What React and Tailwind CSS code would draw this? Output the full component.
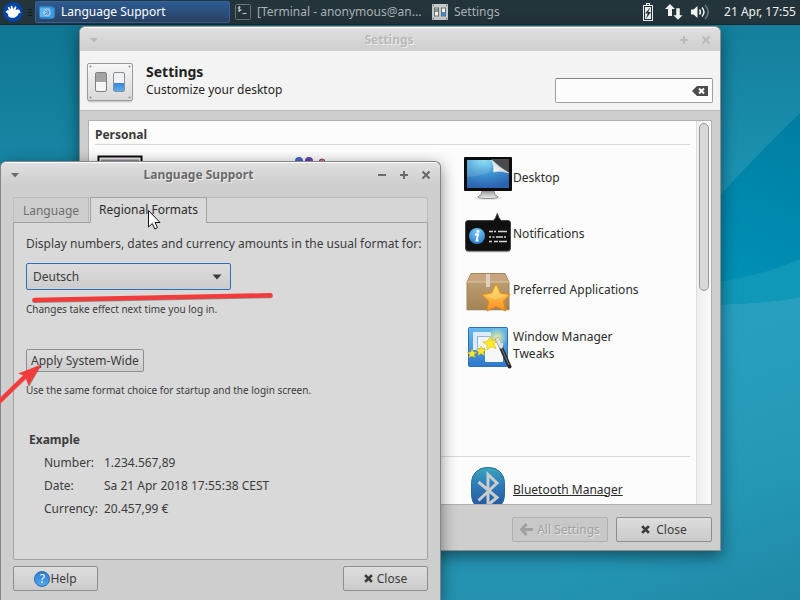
import { useState } from 'react';

// Desktop background with the soft curves on the right
function Wallpaper() {
  return (
    <svg className="absolute inset-0 w-full h-full" viewBox="0 0 800 600" preserveAspectRatio="none" aria-hidden="true">
      <defs>
        <linearGradient id="sky" gradientUnits="userSpaceOnUse" x1="0" y1="0" x2="0" y2="600">
          <stop offset="0" stopColor="#0e728f" />
          <stop offset="0.3" stopColor="#1889a7" />
          <stop offset="0.6" stopColor="#279ebf" />
          <stop offset="1" stopColor="#2492b0" />
        </linearGradient>
        <linearGradient id="sky-top" gradientUnits="userSpaceOnUse" x1="0" y1="25" x2="0" y2="200">
          <stop offset="0" stopColor="#147f9c" />
          <stop offset="1" stopColor="#1c95b5" />
        </linearGradient>
        <linearGradient id="sky-low" gradientUnits="userSpaceOnUse" x1="700" y1="340" x2="800" y2="620">
          <stop offset="0" stopColor="#289fbf" />
          <stop offset="0.5" stopColor="#2498b7" />
          <stop offset="1" stopColor="#1f86a4" />
        </linearGradient>
        <linearGradient id="wave" gradientUnits="userSpaceOnUse" x1="800" y1="113" x2="720" y2="290">
          <stop offset="0" stopColor="#007da1" />
          <stop offset="1" stopColor="#0092b8" />
        </linearGradient>
      </defs>
      <rect width="800" height="600" fill="url(#sky)" />
      <path d="M560 0H800V300H560Z" fill="url(#sky-top)" />
      <path d="M560 290Q700 312 800 297V600H560Z" fill="url(#sky-low)" />
      <path d="M640 290Q710 200 800 113V297Q760 306 640 305Z" fill="url(#wave)" />
      <path d="M640 290Q740 286 800 259V297Q760 306 640 305Z" fill="#1098b9" />
    </svg>
  );
}

function XubuntuLogo() {
  return (
    <svg className="w-5 h-5" viewBox="0 0 20 20" aria-hidden="true">
      <circle cx="10" cy="10" r="10" fill="#0044a6" />
      <path d="M2.500 9.800L4.300 8.300L6 8.600L4.700 5.600L6.200 4.800L8 7.700L7.800 3.900L9.300 3.700L10.200 7.300L12.200 4.300L13.500 5L12.600 8.200L14.700 7.200L16.500 8L17.500 10.500L15.700 11.500L14.500 13.800L11.500 15.700L7.500 15.800L5 14L5.300 12.300Z" fill="#fff" />
    </svg>
  );
}

function FlagIcon() {
  return (
    <svg className="w-4 h-4" viewBox="0 0 16 16" aria-hidden="true">
      <path d="M0 3L2 2H13L16 4V13L13 15H2L0 13Z" fill="#2f80c6" />
      <path d="M1 3.500H11.500V13H1Z" fill="#5bb3ea" />
      <path d="M11.500 4.500H15V14H11.500Z" fill="#3e98dc" />
      <circle cx="8" cy="8.500" r="3.800" fill="#9ccdf0" />
      <path d="M6 6.500L8 8.500L6 11M8.500 6Q11 8.500 8.500 11" stroke="#2f79b5" fill="none" />
    </svg>
  );
}

function TerminalIcon() {
  return (
    <svg className="w-4 h-4" viewBox="0 0 16 16" aria-hidden="true">
      <rect x="0.5" y="0.5" width="15" height="15" rx="1" fill="#26343a" stroke="#6b7474" />
      <path d="M5.500 3.300Q3 2.500 3 3.800T5.500 5.600T3 6.900M4.300 2V8" stroke="#c3c8c8" fill="none" />
      <path d="M7.500 9.500H11.500" stroke="#c3c8c8" />
    </svg>
  );
}

function SwitchesIcon({ className }) {
  return (
    <svg className={className} viewBox="0 0 46 40" preserveAspectRatio="none" aria-hidden="true">
      <defs>
        <linearGradient id="plate" x1="0" y1="0" x2="0" y2="1">
          <stop offset="0" stopColor="#f7f7f7" />
          <stop offset="1" stopColor="#d8d8d8" />
        </linearGradient>
        <linearGradient id="knob-blue" x1="0" y1="0" x2="0" y2="1">
          <stop offset="0" stopColor="#3584d4" />
          <stop offset="1" stopColor="#5aacf0" />
        </linearGradient>
      </defs>
      <rect x="1" y="37" width="44" height="2.500" rx="1" fill="#00000025" />
      <rect x="0.5" y="0.5" width="45" height="37" rx="1.500" fill="url(#plate)" stroke="#9a9a9a" />
      <g fill="#8c8c8c">
        <circle cx="3.500" cy="3.500" r="1" />
        <circle cx="42.500" cy="3.500" r="1" />
        <circle cx="3.500" cy="34.500" r="1" />
        <circle cx="42.500" cy="34.500" r="1" />
      </g>
      <rect x="8.500" y="9.500" width="11" height="19" rx="1.500" fill="#f5f5f5" stroke="#808080" />
      <rect x="9" y="10" width="10" height="9" fill="#a3a3a3" />
      <rect x="26.500" y="9.500" width="11" height="19" rx="1.500" fill="#f2f2f2" stroke="#868e96" />
      <path d="M27 20H37V28H27Z" fill="url(#knob-blue)" />
    </svg>
  );
}

function SmallSwitchesIcon() {
  return (
    <svg className="w-4 h-4" viewBox="0 0 16 16" aria-hidden="true">
      <rect width="16" height="16" rx="1" fill="#c5c8c8" />
      <rect x="2.500" y="4" width="4" height="8" fill="#f3f3f3" stroke="#6d7070" />
      <rect x="3" y="4.500" width="3" height="3.500" fill="#8f9393" />
      <rect x="9.500" y="4" width="4" height="8" fill="#f3f3f3" stroke="#6d7070" />
      <rect x="10" y="8" width="3" height="4" fill="#348ce0" />
      <path d="M1 1h1v1H1zM14 1h1v1h-1zM1 14h1v1H1zM14 14h1v1h-1z" fill="#666" />
    </svg>
  );
}

function BatteryIcon() {
  return (
    <svg className="w-[10px] h-[18px]" viewBox="0 0 10 18" aria-hidden="true">
      <path d="M3 0H7V2H10V18H0V2H3Z" fill="#f2f2f2" />
      <path d="M4 1H6V2H4ZM1 3H9V17H1Z" fill="#22343a" />
      <path d="M2 4H8V16H2Z" fill="#e9ecec" />
      <path d="M7.500 4L2 10.500H4.800L2.800 16L8 9H5.200Z" fill="#22343a" />
    </svg>
  );
}

function NetworkIcon() {
  return (
    <svg className="w-[18px] h-4" viewBox="0 0 18 16" fill="#f2f2f2" aria-hidden="true">
      <path d="M5 0L10 5H7V12H3V5H0Z" />
      <path d="M13 16L8 11H11V4H15V11H18Z" stroke="#22343a" strokeWidth="0.5" />
    </svg>
  );
}

function VolumeIcon() {
  return (
    <svg className="w-[19px] h-4" viewBox="0 0 19 16" fill="none" aria-hidden="true">
      <path d="M0 5.500H2.500L6.500 2V14L2.500 10.500H0Z" fill="#f2f2f2" />
      <path d="M8.500 5.500Q10.500 8 8.500 10.500" stroke="#f2f2f2" strokeWidth="1.500" />
      <path d="M11 3.500Q15 8 11 12.500" stroke="#f2f2f2" strokeWidth="1.500" />
      <path d="M14 1Q20.500 8 14 15" stroke="#70797c" strokeWidth="1.500" />
    </svg>
  );
}

function AppearanceIcon() {
  return (
    <svg className="w-12 h-12" viewBox="0 0 48 48" aria-hidden="true">
      <rect x="2.500" y="3.500" width="43" height="34" fill="#eeeaf0" stroke="#0c0c0c" strokeWidth="2" />
      <path d="M5 6.500H43V34H5Z" fill="#8d8892" />
    </svg>
  );
}

function PeopleIcon() {
  return (
    <svg className="w-12 h-12" viewBox="0 0 48 48" aria-hidden="true">
      <circle cx="19" cy="8" r="4" fill="#4463cf" />
      <circle cx="29" cy="8" r="4" fill="#6843b3" />
      <circle cx="42" cy="9" r="3" fill="#c86aa5" stroke="#8d3f73" />
      <path d="M10 40Q10 14 19 13T24 18Q29 10 38 40Z" fill="#4463cf" />
    </svg>
  );
}

function DesktopIcon() {
  return (
    <svg className="w-12 h-12" viewBox="0 0 48 48" aria-hidden="true">
      <defs>
        <radialGradient id="screen" cx="0.4" cy="0" r="1">
          <stop offset="0" stopColor="#7cdcf5" />
          <stop offset="0.5" stopColor="#3e95d2" />
          <stop offset="1" stopColor="#2c62b0" />
        </radialGradient>
        <linearGradient id="stand" x1="0" y1="0" x2="0" y2="1">
          <stop offset="0" stopColor="#9b9b9b" />
          <stop offset="1" stopColor="#f0f0f0" />
        </linearGradient>
        <linearGradient id="curl" x1="1" y1="0" x2="0" y2="1">
          <stop offset="0" stopColor="#b8b8b8" />
          <stop offset="1" stopColor="#ffffff" />
        </linearGradient>
      </defs>
      <ellipse cx="24" cy="45" rx="14" ry="2" fill="#00000018" />
      <path d="M18 38H30L31 42Q34 43 34 44Q33 45.500 24 45.500T14 44Q14 43 17 42Z" fill="url(#stand)" stroke="#8d8d8d" />
      <rect x="0" y="4" width="48" height="34" rx="1" fill="#0c0c0c" />
      <rect x="3" y="7" width="42" height="28" fill="url(#screen)" />
      <path d="M3 7H27Q28 16 24 20Q15 23 3 24Z" fill="#ffffff22" />
      <path d="M27 6H45V21Z" fill="#4a4a4a" />
      <path d="M27.500 7Q30.500 13 29.500 19Q37 17 45 20Q35 14.500 27.500 7Z" fill="url(#curl)" stroke="#e8e8e8" strokeWidth="0.500" />
    </svg>
  );
}

function NotificationsIcon() {
  return (
    <svg className="w-12 h-12" viewBox="0 0 48 48" aria-hidden="true">
      <defs>
        <radialGradient id="info" cx="0.5" cy="0.2" r="0.9">
          <stop offset="0" stopColor="#79cdf5" />
          <stop offset="1" stopColor="#2670c9" />
        </radialGradient>
      </defs>
      <rect x="2" y="40" width="44" height="3.500" rx="1.500" fill="#00000028" />
      <path d="M4 11.500H29.500Q32 9 33.300 4.500Q34.500 9 37 11.500H44Q46.500 11.500 46.500 14V39Q46.500 42 44 42H4Q1.500 42 1.500 39V14Q1.500 11.500 4 11.500Z" fill="#101010" stroke="#444" />
      <circle cx="13" cy="27" r="8" fill="url(#info)" />
      <circle cx="14" cy="22.500" r="1.400" fill="#fff" />
      <path d="M11 25.500H14L12.500 31.500H14.500" stroke="#fff" strokeWidth="1.800" fill="none" />
      <g stroke="#d5d5d5" strokeWidth="1.300">
        <path d="M25 22.500H43" strokeDasharray="4 1 2 2 9 0" />
        <path d="M25 28H43" strokeDasharray="2 1.500 2 1.500 7 1" />
        <path d="M25 32.500H43" strokeDasharray="3 2 4 1 8 0" />
      </g>
    </svg>
  );
}

function PackageIcon() {
  return (
    <svg className="w-12 h-12" viewBox="0 0 48 48" aria-hidden="true">
      <defs>
        <linearGradient id="box" x1="0" y1="0" x2="0" y2="1">
          <stop offset="0" stopColor="#c3a57c" />
          <stop offset="1" stopColor="#a38355" />
        </linearGradient>
        <linearGradient id="star" x1="0" y1="0" x2="0" y2="1">
          <stop offset="0" stopColor="#ffdb5e" />
          <stop offset="1" stopColor="#fb8f25" />
        </linearGradient>
      </defs>
      <rect x="2" y="42" width="44" height="4" rx="2" fill="#00000020" />
      <path d="M7 8.500H41L45 17V44.500H3V17Z" fill="url(#box)" stroke="#a48253" />
      <path d="M7 9H41L44.500 16.500H3.500Z" fill="#c7a581" />
      <path d="M3 17H45" stroke="#e0c8a0" />
      <path d="M22 9H26V22H22Z" fill="#ded0bd" />
      <path d="M32 18.500L36.500 28L46 29.500L39.500 36L41.500 46L32 41.500L23 46L24.500 36L17.500 29.500L27.500 28Z" fill="url(#star)" stroke="#e08a17" strokeLinejoin="round" />
      <path d="M32 21L35.500 29.200L43 30.500L31.500 34.500L20 30.500L28 29.200Z" fill="#fff1a055" />
    </svg>
  );
}

function TweaksIcon() {
  return (
    <svg className="w-12 h-12" viewBox="0 0 48 48" aria-hidden="true">
      <defs>
        <linearGradient id="tile" x1="0" y1="0" x2="0" y2="1">
          <stop offset="0" stopColor="#66bbec" />
          <stop offset="1" stopColor="#2f78ca" />
        </linearGradient>
        <radialGradient id="glow">
          <stop offset="0" stopColor="#f4f59a" />
          <stop offset="1" stopColor="#f4f59a00" />
        </radialGradient>
      </defs>
      <rect x="4.500" y="6.500" width="39" height="39" rx="1" fill="url(#tile)" stroke="#2d70b5" />
      <rect x="9" y="11" width="18" height="18" rx="1" fill="#dcebf7" />
      <rect x="13.500" y="15.500" width="14" height="12" fill="#f1f6fb" stroke="#8cb7dc" />
      <rect x="21" y="22" width="18" height="19" rx="1" fill="#f7f7f7" />
      <circle cx="33" cy="17" r="10" fill="url(#glow)" />
      <g fill="#ffe928" stroke="#d6b52a" strokeWidth="0.600">
        <path d="M26 15L28 19.500L33 19L30 23L32 27.500L27 26L23 29L23 24L18.500 21L24 20Z" />
        <path d="M17 25L18.500 28L22 28.500L19.500 31L20.500 34.500L17 32.500L14 34.500L14.500 31L12 28.500L16 28Z" />
        <path d="M8 28L9.500 31L12.500 31.500L10 33.500L11 36.500L8 35L5 36.500L6 33.500L3.500 31.500L7 31Z" />
      </g>
      <path d="M33.500 18.500L45.500 45.500" stroke="#28292a" strokeWidth="4" strokeLinecap="round" />
      <path d="M33.500 18.500L37 25.500" stroke="#d8d8d8" strokeWidth="4" strokeLinecap="round" />
      <path d="M33.500 18L45 44" stroke="#ffffff66" strokeWidth="1" />
    </svg>
  );
}

function BluetoothIcon() {
  return (
    <svg className="w-12 h-12" viewBox="0 0 48 48" aria-hidden="true">
      <defs>
        <linearGradient id="bt" x1="0" y1="0" x2="0" y2="1">
          <stop offset="0" stopColor="#3aa5bd" />
          <stop offset="0.400" stopColor="#2f7cb8" />
          <stop offset="1" stopColor="#234f9e" />
        </linearGradient>
      </defs>
      <rect x="7.500" y="2.500" width="33" height="43" rx="15" fill="url(#bt)" stroke="#2a6c91" />
      <path d="M14.500 17L33 32.500L24 40V9.500L33 18L14.500 35.500" fill="none" stroke="#c9cccd" strokeWidth="3" />
    </svg>
  );
}

function CrossIcon() {
  return (
    <svg className="w-[9px] h-[9px]" viewBox="0 0 8 8" aria-hidden="true">
      <path d="M1 1L7 7M7 1L1 7" stroke="currentColor" strokeWidth="2.500" />
    </svg>
  );
}

function TitleBar({ title, active, canMinimize }) {
  const tone = active ? 'text-[#6a6a6a]' : 'text-[#b9b9b9]';

  return (
    <div className={`flex items-center h-6 px-[9px] shrink-0 rounded-t-md bg-linear-to-b from-[#dfdfdf] to-[#cecece] border-t border-white ${tone}`}>
      <button type="button" aria-label="Window menu" className="w-[10px]">
        <svg className="w-[10px] h-3" viewBox="0 0 10 12" aria-hidden="true">
          <path d="M1 4H9L5 8.500Z" fill="currentColor" />
        </svg>
      </button>
      <h1 className="flex-1 text-center font-bold [text-shadow:1px_1px_0_#ffffff99]">{title}</h1>
      <div className="flex gap-3">
        {canMinimize && (
          <button type="button" aria-label="Minimize" className="w-[10px]">
            <svg className="w-[10px] h-[10px]" viewBox="0 0 10 10" aria-hidden="true">
              <path d="M1 5H9" stroke="currentColor" strokeWidth="2" />
            </svg>
          </button>
        )}
        <button type="button" aria-label="Maximize" className="w-[10px]">
          <svg className="w-[10px] h-[10px]" viewBox="0 0 10 10" aria-hidden="true">
            <path d="M1 5H9M5 1V9" stroke="currentColor" strokeWidth="2" />
          </svg>
        </button>
        <button type="button" aria-label="Close window" className="w-[10px]">
          <svg className="w-[10px] h-[10px]" viewBox="0 0 10 10" aria-hidden="true">
            <path d="M1.500 1.500L8.500 8.500M8.500 1.500L1.500 8.500" stroke="currentColor" strokeWidth="2" />
          </svg>
        </button>
      </div>
    </div>
  );
}

function Panel() {
  return (
    <header className="relative flex items-center h-[25px] pl-[3px] pr-1 bg-[#23343a] border-b border-[#1a282d] text-[#a9b1b3]">
      <button type="button" aria-label="Applications menu">
        <XubuntuLogo />
      </button>
      <div className="flex flex-col gap-[2px] w-[4px] ml-[5px] mr-[3px]">
        <span className="h-px bg-[#11191c]" />
        <span className="h-px bg-[#11191c]" />
        <span className="h-px bg-[#11191c]" />
      </div>
      <button type="button" className="flex items-center gap-[6px] w-[195px] h-[22px] pl-[3px] rounded-xs border border-[#3563a0] bg-linear-to-b from-[#2c5a92] to-[#2b4364] text-white">
        <FlagIcon />
        Language Support
      </button>
      <button type="button" className="flex items-center gap-[6px] w-[197px] pl-[5px] whitespace-nowrap">
        <TerminalIcon />
        [Terminal - anonymous@an...
      </button>
      <button type="button" className="flex items-center gap-[6px] pl-[5px]">
        <SmallSwitchesIcon />
        Settings
      </button>
      <div className="flex items-center ml-auto text-[#f0f0f0]">
        <div className="flex items-center gap-3 mr-2">
          <BatteryIcon />
          <NetworkIcon />
        </div>
        <VolumeIcon />
        <time className="ml-[14px]">21 Apr, 17:55</time>
      </div>
    </header>
  );
}

const personalItems = [
  { label: 'Desktop', Icon: DesktopIcon },
  { label: 'Notifications', Icon: NotificationsIcon },
  { label: 'Preferred Applications', Icon: PackageIcon },
  { label: 'Window Manager Tweaks', Icon: TweaksIcon },
];

function SettingsItem({ label, Icon, underline }) {
  return (
    <button type="button" className="flex items-center gap-px h-14 text-left text-[#2b2b2b] leading-[17px]">
      <Icon />
      <span className={`max-w-[130px] ${underline ? 'underline' : ''}`}>{label}</span>
    </button>
  );
}

function SettingsWindow() {
  const [query, setQuery] = useState('');

  return (
    <section className="absolute inset-x-[79px] top-[26px] bottom-[49px] flex flex-col rounded-t-md border border-[#8f8f8f] bg-[#cecece] text-[#2b2b2b] shadow-[0_5px_16px_#00000077]">
      <TitleBar title="Settings" />
      <div className="flex items-start px-[7px] pt-3 h-[60px] shrink-0 bg-[#f3f3f3] border-b border-[#bdbdbd]">
        <SwitchesIcon className="w-[46px] h-10" />
        <div className="pl-[13px] leading-[17px] text-[#1e1e1e]">
          <h2 className="text-sm leading-[18px] font-bold">Settings</h2>
          <p>Customize your desktop</p>
        </div>
        <div className="flex items-center ml-auto mt-[15px] h-[25px] w-[158px] rounded-xs border border-[#a0a0a0] border-t-[#858585] bg-[#fcfcfc] pr-1">
          <input
            type="text"
            aria-label="Search settings"
            className="flex-1 min-w-0 px-2 outline-none"
            value={query}
            onChange={(e) => setQuery(e.target.value)}
          />
          <button type="button" aria-label="Clear search" onClick={() => setQuery('')}>
            <svg className="w-4 h-[10px]" viewBox="0 0 16 10" aria-hidden="true">
              <path d="M5 0H16V10H5L0 5Z" fill="#4b4b4b" />
              <path d="M7 2.500L12 7.500M12 2.500L7 7.500" stroke="#fff" strokeWidth="2" />
            </svg>
          </button>
        </div>
      </div>

      <div className="flex flex-1 min-h-0 mx-2 mt-[9px] border border-[#b0b0b0] bg-[#fcfcfc]">
        <div className="flex-1 min-w-0 overflow-hidden pl-[6px] pr-[6px] pt-[6px]">
          <h3 className="h-[18px] font-bold text-[#3a3a3a] border-b border-[#d8d8d8] mb-1">Personal</h3>
          <div className="grid grid-cols-[184px_184px_1fr] h-[289px] items-start pl-px">
            <div className="h-14 flex items-center"><AppearanceIcon /></div>
            <div className="h-14 flex items-center"><PeopleIcon /></div>
            <div className="flex flex-col">
              {personalItems.map((item) => (
                <SettingsItem key={item.label} {...item} />
              ))}
            </div>
          </div>
          <div className="h-[19px] border-b border-[#d8d8d8] mb-1" />
          <div className="grid grid-cols-[184px_184px_1fr] pl-px">
            <div className="col-start-3">
              <SettingsItem label="Bluetooth Manager" Icon={BluetoothIcon} underline />
            </div>
          </div>
        </div>
        <div className="w-[15px] pt-[2px] px-px border-l border-[#dedede] bg-linear-to-r from-[#efefef] to-[#fafafa]">
          <div className="w-[10px] h-[168px] ml-px rounded-full border border-[#989898] bg-[#d8d8d8]" />
        </div>
      </div>

      <footer className="flex justify-end gap-2 px-2 pt-3 pb-2 shrink-0">
        <button type="button" disabled className="flex items-center justify-center gap-1 w-24 h-[25px] rounded-xs border border-[#b0b0b0] bg-[#c8c8c8] text-[#a0a0a0] [text-shadow:1px_1px_0_#e2e2e2]">
          <svg className="w-[13px] h-[13px]" viewBox="0 0 13 13" aria-hidden="true">
            <path d="M6.500 1L1.500 6.500L6.500 12M2 6.500H13" stroke="#a0a0a0" strokeWidth="3" fill="none" />
          </svg>
          All Settings
        </button>
        <button type="button" className="flex items-center justify-center gap-[6px] w-24 h-[25px] rounded-xs border border-[#8e8e8e] bg-linear-to-b from-[#dddddd] to-[#cbcbcb] text-[#3c3c3c]">
          <CrossIcon />
          Close
        </button>
      </footer>
    </section>
  );
}

const examples = [
  ['Number:', '1.234.567,89'],
  ['Date:', 'Sa 21 Apr 2018 17:55:38 CEST'],
  ['Currency:', '20.457,99 €'],
];

function LanguageWindow() {
  return (
    <section className="absolute left-0 top-[161px] bottom-0 w-[441px] flex flex-col rounded-t-md border border-b-0 border-[#858585] bg-[#cecece] text-[#3c3c3c] shadow-[0_4px_16px_#00000077]">
      <TitleBar title="Language Support" active canMinimize />
      <div className="flex flex-col flex-1 px-3 pt-[11px] pb-[9px]">
        <div role="tablist" className="flex items-end gap-px h-[25px] rounded-t-xs border border-b-0 border-[#bcbcbc] bg-[#d6d6d6]">
          <button type="button" role="tab" aria-selected="false" className="self-stretch w-[75px] pt-px border-r border-[#bababa] bg-[#cdcdcd] text-[#6e6e6e]">
            Language
          </button>
          <button type="button" role="tab" aria-selected="true" className="self-stretch w-[117px] -mt-px -mb-px pb-[2px] relative rounded-t-xs border border-b-0 border-[#a2a2a2] bg-[#d9d9d9] text-[#2b2b2b]">
            Regional Formats
          </button>
        </div>
        <div role="tabpanel" className="flex-1 flex flex-col items-start pl-3 pt-[13px] rounded-b-xs border border-[#a2a2a2] bg-[#d9d9d9]">
          <label htmlFor="format" className="whitespace-nowrap">
            Display numbers, dates and currency amounts in the usual format for:
          </label>
          <div className="relative mt-[11px]">
            <select id="format" className="appearance-none block w-[205px] h-[27px] pl-[6px] rounded-xs border border-[#2d6fb8] bg-linear-to-b from-[#dddddd] to-[#cccccc]">
              <option>Deutsch</option>
            </select>
            <svg className="absolute right-[9px] top-[11px] w-[10px] h-[6px] pointer-events-none" viewBox="0 0 10 6" aria-hidden="true">
              <path d="M0.500 0.500H9.500L5 5.500Z" fill="#3c3c3c" />
            </svg>
          </div>
          <p className="mt-[11px] text-[10px] leading-4">Changes take effect next time you log in.</p>
          <button type="button" className="mt-8 h-[23px] px-1 rounded-xs border border-[#8e8e8e] bg-linear-to-b from-[#dddddd] to-[#cecece]">
            Apply System-Wide
          </button>
          <p className="mt-[10px] text-[10px] leading-4">Use the same format choice for startup and the login screen.</p>
          <h2 className="mt-[34px] ml-[3px] font-bold">Example</h2>
          <table className="mt-[3px] ml-[18px]">
            <tbody>
              {examples.map(([name, value]) => (
                <tr key={name} className="h-[23px]">
                  <th scope="row" className="w-[60px] font-normal text-left">{name}</th>
                  <td>{value}</td>
                </tr>
              ))}
            </tbody>
          </table>
        </div>
        <footer className="flex justify-between mt-[6px]">
          <button type="button" className="flex items-center justify-center w-[85px] h-[25px] rounded-xs border border-[#8e8e8e] bg-linear-to-b from-[#dddddd] to-[#cbcbcb]">
            <span className="flex items-center justify-center w-4 h-4 rounded-full border border-[#2767ad] bg-linear-to-b from-[#2f7fd0] to-[#4ea9ef] text-white">?</span>
            Help
          </button>
          <button type="button" className="flex items-center justify-center gap-1 w-[85px] h-[25px] rounded-xs border border-[#8e8e8e] bg-linear-to-b from-[#dddddd] to-[#cbcbcb]">
            <CrossIcon />
            Close
          </button>
        </footer>
      </div>
    </section>
  );
}

// Mouse pointer and the red hand-drawn marks, above every window
function Annotations() {
  return (
    <svg className="absolute left-0 top-0 w-[300px] h-[420px] pointer-events-none" viewBox="0 0 300 420" aria-hidden="true">
      <path d="M34.500 300.800L270.500 296" stroke="#00000055" strokeWidth="4.500" strokeLinecap="round" />
      <path d="M34.500 300L270.500 295.300" stroke="#f43b3b" strokeWidth="4.500" strokeLinecap="round" />
      <path d="M0 403L27 379L29 387L41.500 365Z" fill="#00000055" />
      <path d="M-1 402L27 374.500" stroke="#f43b3b" strokeWidth="4.500" />
      <path d="M41.500 364.500L18 373.500L25 376L28.500 386Z" fill="#f43b3b" />
      <path d="M148.500 210.500V227L152.300 223.500L154.800 229L157.500 227.700L155 222.500H160Z" fill="#fff" stroke="#111" strokeLinejoin="round" />
    </svg>
  );
}

export default function App() {
  return (
    <main className="relative h-screen overflow-hidden bg-[#1889a7] font-['Noto_Sans',sans-serif] text-xs">
      <Wallpaper />
      <Panel />
      <SettingsWindow />
      <LanguageWindow />
      <Annotations />
    </main>
  );
}
